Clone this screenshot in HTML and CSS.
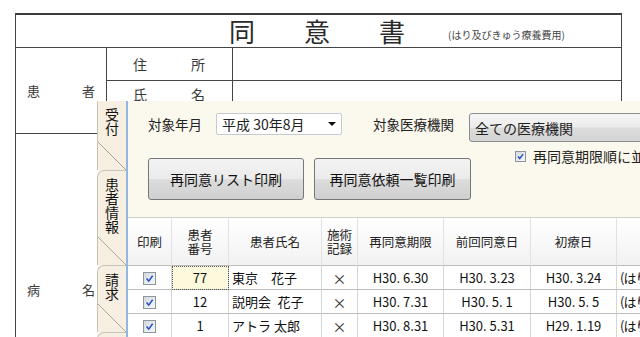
FILE: index.html
```html
<!DOCTYPE html>
<html lang="ja">
<head>
    <meta charset="UTF-8">
    <title>同意書</title>
    <link rel="stylesheet" href="styles.css">
</head>
<body>
    <div class="doc">
        <div class="doc-title">
            <span class="title-main">同意書</span>
            <span class="title-sub">(はり及びきゅう療養費用)</span>
        </div>
        <div class="doc-section patient">
            <div class="doc-label"><span>患</span><span>者</span></div>
            <div class="doc-rows">
                <div class="doc-row row-addr">
                    <div class="doc-sub"><span>住</span><span>所</span></div>
                    <div class="doc-value"></div>
                </div>
                <div class="doc-row row-name">
                    <div class="doc-sub"><span>氏</span><span>名</span></div>
                    <div class="doc-value"></div>
                </div>
                <div class="doc-row row-birth">
                    <div class="doc-sub"></div>
                    <div class="doc-value"></div>
                </div>
            </div>
        </div>
        <div class="doc-section disease">
            <div class="doc-label"><span>病</span><span>名</span></div>
            <div class="doc-body"></div>
        </div>
    </div>

    <div class="app">
        <div class="tabs">
            <div class="tab tab-1"><div class="tab-label">受付</div></div>
            <div class="tab tab-2"><div class="tab-label">患者情報</div></div>
            <div class="tab tab-3"><div class="tab-label">請求</div></div>
            <div class="tab tab-4"></div>
        </div>
        <div class="content">
            <div class="filter-row">
                <span class="field-label">対象年月</span>
                <div class="combo combo-month">
                    <span class="combo-text">平成 30年8月</span>
                    <span class="combo-arrow"></span>
                </div>
                <span class="field-label label-clinic">対象医療機関</span>
                <div class="combo combo-clinic">
                    <span class="combo-text">全ての医療機関</span>
                </div>
            </div>
            <div class="action-row">
                <button class="button">再同意リスト印刷</button>
                <button class="button button-second">再同意依頼一覧印刷</button>
                <label class="sort-option">
                    <span class="chk chk-small"><svg viewBox="0 0 11 11"><path d="M2.5 5.5 L4.6 8 L8.6 2.6" /></svg></span>
                    <span>再同意期限順に並べる</span>
                </label>
            </div>

            <table class="grid">
                <colgroup>
                    <col class="c-print">
                    <col class="c-no">
                    <col class="c-name">
                    <col class="c-rec">
                    <col class="c-date">
                    <col class="c-date2">
                    <col class="c-date">
                    <col class="c-rest">
                </colgroup>
                <thead>
                    <tr>
                        <th>印刷</th>
                        <th>患者<br>番号</th>
                        <th>患者氏名</th>
                        <th>施術<br>記録</th>
                        <th>再同意期限</th>
                        <th>前回同意日</th>
                        <th>初療日</th>
                        <th></th>
                    </tr>
                </thead>
                <tbody>
                    <tr>
                        <td class="center"><span class="chk"><svg viewBox="0 0 13 13"><path d="M3 6.6 L5.6 9.6 L10.2 3.2" /></svg></span></td>
                        <td class="center focus">77</td>
                        <td class="name">東京　花子</td>
                        <td class="center mark">×</td>
                        <td class="center date">H30. 6.30</td>
                        <td class="center date">H30. 3.23</td>
                        <td class="center date">H30. 3.24</td>
                        <td class="name rest">(はり</td>
                    </tr>
                    <tr>
                        <td class="center"><span class="chk"><svg viewBox="0 0 13 13"><path d="M3 6.6 L5.6 9.6 L10.2 3.2" /></svg></span></td>
                        <td class="center">12</td>
                        <td class="name">説明会&ensp;花子</td>
                        <td class="center mark">×</td>
                        <td class="center date">H30. 7.31</td>
                        <td class="center date">H30. 5. 1</td>
                        <td class="center date">H30. 5. 5</td>
                        <td class="name rest">(はり</td>
                    </tr>
                    <tr>
                        <td class="center"><span class="chk"><svg viewBox="0 0 13 13"><path d="M3 6.6 L5.6 9.6 L10.2 3.2" /></svg></span></td>
                        <td class="center">1</td>
                        <td class="name">アトラ 太郎</td>
                        <td class="center mark">×</td>
                        <td class="center date">H30. 8.31</td>
                        <td class="center date">H30. 5.31</td>
                        <td class="center date">H29. 1.19</td>
                        <td class="name rest">(はり</td>
                    </tr>
                </tbody>
            </table>
        </div>
    </div>
</body>
</html>
```

FILE: styles.css
```css
body {
    margin: 0;
    width: 640px;
    height: 337px;
    overflow: hidden;
    position: relative;
    background: #fff;
    font-family: "Noto Sans CJK JP", "Noto Sans", sans-serif;
    color: #222;
}

/* background paper form */
.doc {
    margin: 13px 0 0 15px;
    width: 607px;
    box-sizing: border-box;
    border-top: 2px solid #3c3c3c;
    border-left: 1px solid #444;
    border-right: 1px solid #444;
    color: #3a3a3a;
}
.doc-title {
    height: 32px;
    border-bottom: 1px solid #444;
    display: flex;
    align-items: center;
    padding-left: 213px;
}
.title-main {
    font-size: 26px;
    line-height: 30px;
    letter-spacing: 49px;
    color: #2a2a2a;
}
.title-sub {
    font-size: 10px;
    margin-left: -6px;
    margin-top: 7px;
    color: #444;
}
.doc-section {
    display: flex;
    border-bottom: 1px solid #444;
}
.doc-label {
    width: 91px;
    box-sizing: border-box;
    border-right: 1px solid #444;
    display: flex;
    justify-content: space-between;
    align-items: center;
    padding: 0 11px;
    font-size: 13px;
}
.doc-rows {
    flex: 1;
}
.doc-row {
    display: flex;
    border-bottom: 1px solid #444;
}
.doc-row:last-child {
    border-bottom: none;
}
.row-addr { height: 32px; }
.row-name { height: 25px; }
.row-birth { height: 26px; }
.doc-sub {
    width: 126px;
    box-sizing: border-box;
    border-right: 1px solid #444;
    display: flex;
    justify-content: space-between;
    align-items: center;
    padding: 0 27px 0 26px;
    font-size: 14px;
}
.doc-value {
    flex: 1;
}
.disease {
    height: 204px;
    border-bottom: none;
}
.disease .doc-label {
    align-items: flex-start;
    padding-top: 146px;
    line-height: 19px;
}

/* application window */
.app {
    position: absolute;
    left: 97px;
    top: 101px;
    right: 0;
    bottom: 0;
    display: flex;
}
.tabs {
    width: 29px;
    background: #fcf9f3;
    border-right: 2px solid #92b6dd;
    display: flex;
    flex-direction: column;
    overflow: hidden;
}
.tab {
    flex: none;
    box-sizing: border-box;
    border-left: 1px solid #c9c2b6;
    background:
        linear-gradient(to top right, transparent calc(50% - 0.7px), #aaa49a 50%, transparent calc(50% + 0.7px)) bottom / 100% 28px no-repeat,
        #f7efe2;
}
.tab-1 { height: 69px; }
.tab-2 { height: 95px; border-top: 1px solid #c9c2b6; border-top-left-radius: 7px; }
.tab-3 { height: 67px; border-top: 1px solid #c9c2b6; border-top-left-radius: 7px; }
.tab-4 { height: 40px; border-top: 1px solid #c9c2b6; border-top-left-radius: 7px; }
.tab-label {
    width: 14px;
    margin: 6px auto 0;
    font-size: 14px;
    line-height: 14px;
    text-align: center;
    color: #111;
}
.content {
    flex: 1;
    background: #fbf8ee;
    padding-top: 12px;
    overflow: hidden;
    font-size: 13.5px;
}

.filter-row {
    display: flex;
    align-items: flex-start;
    padding-left: 20px;
    height: 29px;
}
.field-label {
    margin-top: 2px;
    line-height: 18px;
    white-space: nowrap;
}
.label-clinic {
    margin-left: 31px;
}
.combo {
    flex: none;
    box-sizing: border-box;
    display: flex;
    align-items: center;
    white-space: nowrap;
}
.combo-month {
    margin-left: 14px;
    width: 126px;
    height: 22px;
    background: #fff;
    border: 1px solid #c5c9d0;
    border-radius: 2px;
    padding: 0 0 0 5px;
    font-size: 14px;
}
.combo-text {
    flex: 1;
}
.combo-arrow {
    width: 0;
    height: 0;
    border-left: 4px solid transparent;
    border-right: 4px solid transparent;
    border-top: 4px solid #111;
    margin-right: 5px;
}
.combo-clinic {
    margin-left: 15px;
    width: 220px;
    height: 29px;
    border: 1px solid #8c8c8c;
    border-radius: 3px;
    padding-left: 5px;
    font-size: 14px;
    background: linear-gradient(#f6f6f6 0%, #ececec 48%, #dcdcdc 52%, #d4d4d4 100%);
}

.action-row {
    display: flex;
    align-items: flex-start;
    padding-left: 20px;
    margin-top: 3px;
}
.button {
    flex: none;
    margin-top: 13px;
    width: 156px;
    height: 42px;
    border: 1px solid #777;
    border-radius: 3px;
    background: linear-gradient(#f3f3f3 0%, #ebebeb 50%, #dddddd 51%, #cfcfcf 100%);
    font-family: inherit;
    font-size: 14px;
    color: #111;
    padding: 0;
}
.button-second {
    margin-left: 10px;
    width: 157px;
}
.sort-option {
    margin-left: 44px;
    margin-top: 1px;
    display: flex;
    align-items: center;
    white-space: nowrap;
    font-size: 14px;
}
.sort-option .chk {
    margin-right: 7px;
}

.chk {
    display: inline-block;
    width: 13px;
    height: 13px;
    box-sizing: border-box;
    border: 1px solid #8e959e;
    background: linear-gradient(135deg, #d6d9de, #f6f7f9);
    vertical-align: middle;
}
.chk svg {
    display: block;
    width: 100%;
    height: 100%;
}
.chk path {
    fill: none;
    stroke: #2452c8;
    stroke-width: 1.8;
}
.chk-small {
    width: 11px;
    height: 11px;
}

/* data grid */
.grid {
    margin-top: 17px;
    width: 560px;
    table-layout: fixed;
    border-collapse: separate;
    border-spacing: 0;
    background: #fff;
    border-top: 1px solid #cfcfcf;
    font-size: 13px;
}
.c-print { width: 44px; }
.c-no { width: 57px; }
.c-name { width: 93px; }
.c-rec { width: 36px; }
.c-date { width: 86px; }
.c-date2 { width: 87px; }
.c-rest { width: 71px; }
.grid th {
    height: 47px;
    padding: 0;
    font-weight: normal;
    font-size: 12.5px;
    line-height: 14px;
    color: #222;
    background: linear-gradient(#ffffff, #f2f2f2);
    border-right: 1px solid #e2e2e2;
    border-bottom: 1px solid #bdbdbd;
}
.grid td {
    height: 24px;
    box-sizing: border-box;
    padding: 0;
    border-right: 1px solid #d6d6d6;
    border-bottom: 1px solid #bdbdbd;
    white-space: pre;
    overflow: hidden;
    color: #111;
}
.grid td.center {
    text-align: center;
}
.grid td.name {
    padding-left: 3px;
}
.grid td.rest {
    letter-spacing: -1px;
}
.grid td.focus {
    background: #fcf9dd;
    outline: 1px dotted #555;
    outline-offset: -1px;
}
.grid td.mark {
    font-size: 14px;
    color: #333;
}
.grid td .chk {
    margin-top: -2px;
}
```
